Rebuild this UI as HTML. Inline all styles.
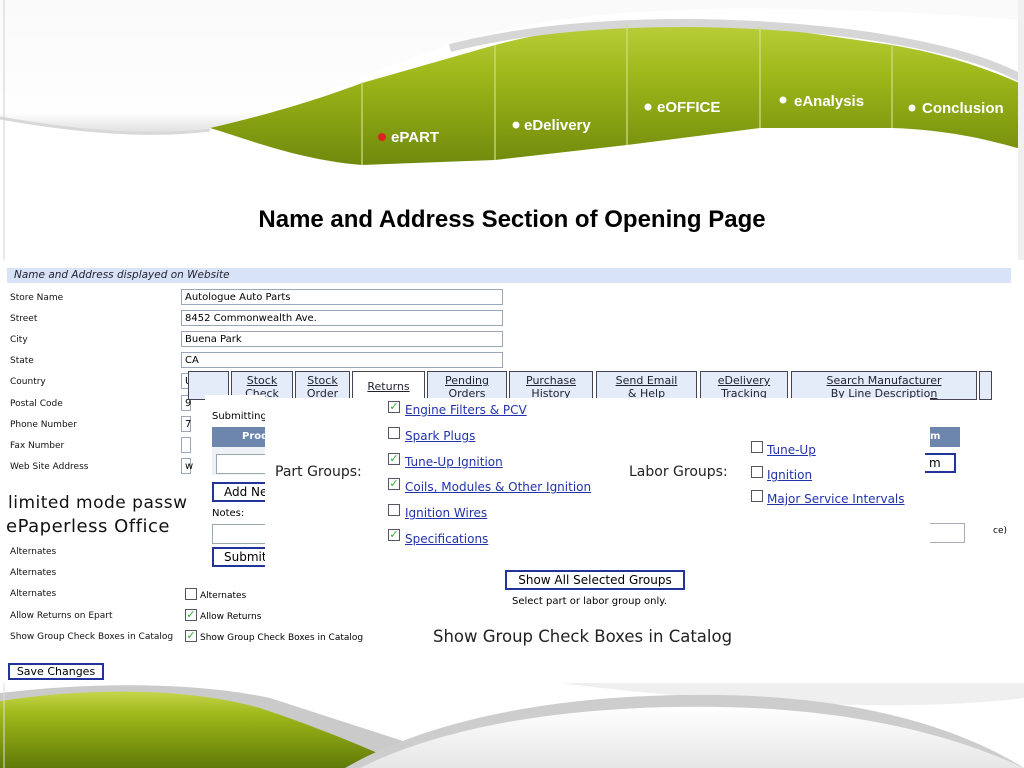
<!DOCTYPE html>
<html><head><meta charset="utf-8"><style>
body{margin:0;width:1024px;height:768px;position:relative;overflow:hidden;background:#fff;font-family:"DejaVu Sans",Verdana,sans-serif}
.a{position:absolute;white-space:nowrap}
.lbl{font-size:9px;color:#111;left:10px}
.inp{position:absolute;left:181px;height:16px;border:1px solid #9aa7b8;background:#fff;font-size:10px;line-height:16px;padding-left:3px;box-sizing:border-box;width:322px}
.tab{position:absolute;top:371px;height:29px;background:#e4ecfa;border:1px solid #445;box-sizing:border-box;font-size:11px;text-align:center;text-decoration:underline;color:#223;line-height:13px;padding-top:2px;overflow:hidden}
.lk{font-size:12px;color:#2233aa;text-decoration:underline}
.cb{position:absolute;width:12px;height:12px;border:1px solid #556;background:#fff;box-sizing:border-box;font-size:11px;line-height:10px;color:#3a3;text-align:center}
.btn{position:absolute;border:2px solid #223399;background:#fff;box-sizing:border-box;font-size:12px;text-align:center}
</style></head><body>
<svg class="a" style="left:0;top:0" width="1024" height="260">
<defs>
<linearGradient id="g" x1="0" y1="0" x2="0" y2="1"><stop offset="0" stop-color="#b9cf3a"/><stop offset=".35" stop-color="#9fb81a"/><stop offset="1" stop-color="#6f8a0c"/></linearGradient>
<linearGradient id="w" x1="0" y1="0" x2="0" y2="1"><stop offset="0" stop-color="#fafafa"/><stop offset=".85" stop-color="#fefefe"/><stop offset="1" stop-color="#e0e0e0"/></linearGradient>
</defs>
<rect width="1024" height="260" fill="#fff"/>
<path d="M0,0H1024V20C880,10 700,0 560,20C420,40 330,100 210,128C130,140 40,125 0,118Z" fill="url(#w)"/>
<path d="M0,118C40,125 130,140 210,130" stroke="#d8d8d8" stroke-width="3" fill="none"/>
<path d="M210,128C280,112 330,95 362,83L495,45C540,33 590,26 627,24L760,26L892,45C950,55 990,70 1024,85V150C990,140 950,130 892,128L760,128L627,145L495,160L362,165C300,160 250,140 210,128Z" fill="url(#g)"/>
<path d="M450,48C560,20 700,18 820,30C920,40 990,60 1024,80" stroke="#d6d6d6" stroke-width="8" fill="none"/>
<g stroke="#cfe08a" stroke-width="1.2"><line x1="362" y1="82" x2="362" y2="165"/><line x1="495" y1="45" x2="495" y2="160"/><line x1="627" y1="24" x2="627" y2="145"/><line x1="760" y1="26" x2="760" y2="128"/><line x1="892" y1="45" x2="892" y2="128"/></g>
<rect x="1018" y="0" width="6" height="260" fill="#f0f0f0"/>
<line x1="4" y1="0" x2="4" y2="260" stroke="#d0d0d0"/>
<g font-family="Liberation Sans,sans-serif" font-weight="bold" font-size="15" fill="#fff">
<circle cx="382" cy="137" r="4" fill="#d22"/><text x="391" y="142">ePART</text>
<circle cx="516" cy="125" r="3.5"/><text x="524" y="130">eDelivery</text>
<circle cx="648" cy="107" r="3.5"/><text x="657" y="112">eOFFICE</text>
<circle cx="783" cy="100" r="3.5"/><text x="794" y="106">eAnalysis</text>
<circle cx="912" cy="108" r="3.5"/><text x="922" y="113">Conclusion</text>
</g>
<text x="512" y="227" text-anchor="middle" font-family="Liberation Sans,sans-serif" font-weight="bold" font-size="24" fill="#000">Name and Address Section of Opening Page</text>
</svg>

<div class="a" style="left:7px;top:268px;width:1004px;height:15px;background:#d9e3f7"></div>
<div class="a" style="left:14px;top:269px;font-size:10.5px;font-style:italic;color:#223">Name and Address displayed on Website</div>
<div class="a lbl" style="top:293px">Store Name</div><div class="inp" style="top:289px">Autologue Auto Parts</div>
<div class="a lbl" style="top:314px">Street</div><div class="inp" style="top:310px">8452 Commonwealth Ave.</div>
<div class="a lbl" style="top:335px">City</div><div class="inp" style="top:331px">Buena Park</div>
<div class="a lbl" style="top:356px">State</div><div class="inp" style="top:352px">CA</div>
<div class="a lbl" style="top:377px">Country</div><div class="inp" style="top:373px;width:10px">U</div>
<div class="a lbl" style="top:399px">Postal Code</div><div class="inp" style="top:395px;width:10px">9</div>
<div class="a lbl" style="top:420px">Phone Number</div><div class="inp" style="top:416px;width:10px">7</div>
<div class="a lbl" style="top:441px">Fax Number</div><div class="inp" style="top:437px;width:10px"></div>
<div class="a lbl" style="top:462px">Web Site Address</div><div class="inp" style="top:458px;width:10px">w</div>
<div class="a" style="left:8px;top:493px;font-size:17px;color:#111;letter-spacing:.5px">limited mode passw</div>
<div class="a" style="left:6px;top:516px;font-size:18px;color:#111;letter-spacing:.5px">ePaperless Office</div>
<div class="a lbl" style="top:547px">Alternates</div>
<div class="a lbl" style="top:568px">Alternates</div>
<div class="a lbl" style="top:589px">Alternates</div>
<div class="a lbl" style="top:611px">Allow Returns on Epart</div>
<div class="a lbl" style="top:632px">Show Group Check Boxes in Catalog</div>
<div class="cb" style="left:185px;top:588px"></div><div class="a" style="left:200px;top:591px;font-size:9px">Alternates</div>
<div class="cb" style="left:185px;top:609px">✓</div><div class="a" style="left:200px;top:612px;font-size:9px">Allow Returns</div>
<div class="cb" style="left:185px;top:630px">✓</div><div class="a" style="left:200px;top:633px;font-size:9px">Show Group Check Boxes in Catalog</div>
<div class="btn" style="left:8px;top:663px;width:96px;height:17px;font-size:11px;line-height:13px">Save Changes</div>

<div class="tab" style="left:188px;width:41px"></div>
<div class="tab" style="left:231px;width:62px">Stock<br>Check</div>
<div class="tab" style="left:295px;width:55px">Stock<br>Order</div>
<div class="tab" style="left:352px;width:73px;background:#fff;padding-top:8px">Returns</div>
<div class="tab" style="left:427px;width:80px">Pending<br>Orders</div>
<div class="tab" style="left:509px;width:84px">Purchase<br>History</div>
<div class="tab" style="left:596px;width:101px">Send Email<br>&amp; Help</div>
<div class="tab" style="left:700px;width:88px">eDelivery<br>Tracking</div>
<div class="tab" style="left:791px;width:186px">Search Manufacturer<br>By Line Description</div>
<div class="tab" style="left:979px;width:13px"></div>

<div class="a" style="left:205px;top:395px;width:60px;height:180px;background:#fff"></div>
<div class="a" style="left:212px;top:411px;font-size:10px">Submitting</div>
<div class="a" style="left:212px;top:427px;width:53px;height:20px;background:#6c86ad;color:#fff;font-size:10px;font-weight:bold;line-height:20px;padding-left:30px;box-sizing:border-box">Prod</div>
<div class="a" style="left:212px;top:447px;width:53px;height:28px;background:#eef1f6"></div>
<div class="a" style="left:216px;top:454px;width:49px;height:18px;border:1px solid #9aa;border-right:none;background:#fff"></div>
<div class="btn" style="left:212px;top:482px;width:60px;height:20px;border-right:none;text-align:left;padding-left:10px;line-height:16px">Add Ne</div>
<div class="a" style="left:212px;top:508px;font-size:10px">Notes:</div>
<div class="a" style="left:212px;top:524px;width:53px;height:18px;border:1px solid #9aa;border-right:none"></div>
<div class="btn" style="left:212px;top:547px;width:60px;height:20px;border-right:none;text-align:left;padding-left:10px;line-height:16px">Submit</div>

<div class="a" style="left:265px;top:398px;width:665px;height:220px;background:#fff"></div>
<div class="a" style="left:275px;top:464px;font-size:14px;color:#222">Part Groups:</div>
<div class="a" style="left:629px;top:464px;font-size:14px;color:#222">Labor Groups:</div>
<div class="cb" style="left:388px;top:401px">✓</div><div class="a lk" style="left:405px;top:403px">Engine Filters &amp; PCV</div>
<div class="cb" style="left:388px;top:427px"></div><div class="a lk" style="left:405px;top:429px">Spark Plugs</div>
<div class="cb" style="left:388px;top:453px">✓</div><div class="a lk" style="left:405px;top:455px">Tune-Up Ignition</div>
<div class="cb" style="left:388px;top:478px">✓</div><div class="a lk" style="left:405px;top:480px">Coils, Modules &amp; Other Ignition</div>
<div class="cb" style="left:388px;top:504px"></div><div class="a lk" style="left:405px;top:506px">Ignition Wires</div>
<div class="cb" style="left:388px;top:529px">✓</div><div class="a lk" style="left:405px;top:532px">Specifications</div>
<div class="cb" style="left:751px;top:441px"></div><div class="a lk" style="left:767px;top:443px">Tune-Up</div>
<div class="cb" style="left:751px;top:466px"></div><div class="a lk" style="left:767px;top:468px">Ignition</div>
<div class="cb" style="left:751px;top:490px"></div><div class="a lk" style="left:767px;top:492px">Major Service Intervals</div>
<div class="btn" style="left:505px;top:570px;width:180px;height:20px;line-height:16px">Show All Selected Groups</div>
<div class="a" style="left:512px;top:596px;font-size:10px">Select part or labor group only.</div>
<div class="a" style="left:433px;top:627px;font-size:16.5px;color:#222">Show Group Check Boxes in Catalog</div>

<div class="a" style="left:930px;top:427px;width:30px;height:20px;background:#6c86ad;color:#fff;font-size:10px;font-weight:bold;line-height:20px">m</div>
<div class="btn" style="left:925px;top:453px;width:31px;height:20px;border-left:none;text-align:left;line-height:16px;padding-left:4px">m</div>
<div class="a" style="left:930px;top:523px;width:34px;height:18px;border:1px solid #aab;border-left:none"></div>
<div class="a" style="left:993px;top:526px;font-size:9px">ce)</div>

<svg class="a" style="left:0;top:683px" width="1024" height="85">
<defs><linearGradient id="g2" x1="0" y1="0" x2="0" y2="1"><stop offset="0" stop-color="#c4d64a"/><stop offset=".3" stop-color="#9fb81a"/><stop offset="1" stop-color="#5f7a08"/></linearGradient>
<linearGradient id="w2" x1="0" y1="0" x2="0" y2="1"><stop offset="0" stop-color="#fff"/><stop offset="1" stop-color="#e6e6e6"/></linearGradient></defs>
<rect width="1024" height="85" fill="#fff"/>
<path d="M560,0H1024V15C900,30 720,20 560,0Z" fill="#efefef"/>
<path d="M0,10C100,-2 200,0 270,15L440,70L420,85H0Z" fill="#cacaca"/>
<path d="M0,18C90,4 190,5 260,25C320,45 380,70 410,85H0Z" fill="url(#g2)"/>
<path d="M345,85C450,25 600,10 720,12C860,14 960,45 1024,85Z" fill="#cdcdcd"/>
<path d="M360,85C460,35 600,22 720,24C860,26 960,55 1024,85Z" fill="url(#w2)"/>
<line x1="4" y1="0" x2="4" y2="85" stroke="#ddd"/>
</svg>
</body></html>
